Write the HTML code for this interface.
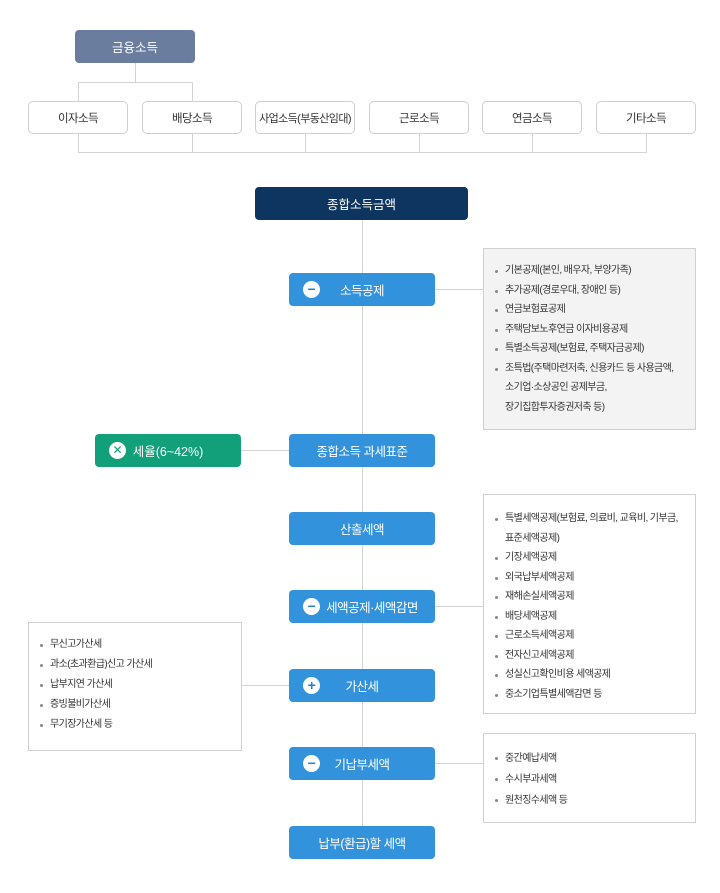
<!DOCTYPE html>
<html><head><meta charset="utf-8"><style>
body{margin:0;width:720px;height:893px;background:#fff;position:relative;font-family:"Liberation Sans","Noto Sans CJK KR",sans-serif;overflow:hidden}
.a{position:absolute;box-sizing:border-box}
.l{position:absolute;background:#d4d4d4}
.inc{position:absolute;box-sizing:border-box;top:101px;width:100px;height:33px;border:1px solid #cfcfcf;border-radius:5px;background:#fff;font-size:11.5px;color:#333;display:flex;align-items:center;justify-content:center;letter-spacing:-0.6px;white-space:nowrap}
.bb{position:absolute;box-sizing:border-box;left:289px;width:146px;height:33px;background:#3392dc;border-radius:4px;color:#fff;font-size:12.5px;display:flex;align-items:center;justify-content:center;letter-spacing:-0.5px}
.ic{position:absolute;left:14px;top:8px;width:17px;height:17px;border-radius:50%;background:#fff;color:#2a80c8;font-size:14px;font-weight:bold;line-height:17px;text-align:center}
.bx{position:absolute;box-sizing:border-box;border:1px solid #d0d0d0;font-size:10px;color:#333;letter-spacing:-0.6px;white-space:nowrap}
.bx ul{margin:0;padding:0;list-style:none}
.bx li{position:relative;padding-left:13px;line-height:19.5px}
.bx li:before{content:"";position:absolute;left:3px;top:9px;width:3px;height:3px;border-radius:50%;background:#888}
.bx li.n:before{display:none}
</style></head><body>
<div class="a" style="left:75px;top:30px;width:120px;height:33px;background:#6a7d9e;border-radius:4px;color:#fff;font-size:12.5px;display:flex;align-items:center;justify-content:center">금융소득</div>
<div class="l" style="left:135px;top:63px;width:1px;height:19px"></div>
<div class="l" style="left:78px;top:82px;width:115px;height:1px"></div>
<div class="l" style="left:78px;top:82px;width:1px;height:19px"></div>
<div class="l" style="left:192px;top:82px;width:1px;height:19px"></div>
<div class="inc" style="left:28px">이자소득</div>
<div class="inc" style="left:142px">배당소득</div>
<div class="inc" style="left:255px;font-size:11px">사업소득(부동산임대)</div>
<div class="inc" style="left:369px">근로소득</div>
<div class="inc" style="left:482px">연금소득</div>
<div class="inc" style="left:596px">기타소득</div>
<div class="l" style="left:78px;top:134px;width:1px;height:18px"></div>
<div class="l" style="left:192px;top:134px;width:1px;height:18px"></div>
<div class="l" style="left:305px;top:134px;width:1px;height:18px"></div>
<div class="l" style="left:419px;top:134px;width:1px;height:18px"></div>
<div class="l" style="left:532px;top:134px;width:1px;height:18px"></div>
<div class="l" style="left:646px;top:134px;width:1px;height:18px"></div>
<div class="l" style="left:78px;top:152px;width:569px;height:1px"></div>
<div class="a" style="left:255px;top:187px;width:213px;height:33px;background:#0d3560;border-radius:4px;color:#fff;font-size:12.5px;display:flex;align-items:center;justify-content:center">종합소득금액</div>
<div class="l" style="left:362px;top:220px;width:1px;height:608px"></div>
<div class="l" style="left:435px;top:289px;width:48px;height:1px"></div>
<div class="l" style="left:241px;top:450px;width:48px;height:1px"></div>
<div class="l" style="left:435px;top:606px;width:48px;height:1px"></div>
<div class="l" style="left:241px;top:685px;width:48px;height:1px"></div>
<div class="l" style="left:435px;top:763px;width:48px;height:1px"></div>
<div class="bb" style="top:273px"><span class="ic">−</span>소득공제</div>
<div class="a" style="left:95px;top:434px;width:146px;height:33px;background:#12a07b;border-radius:4px;color:#fff;font-size:12.5px;display:flex;align-items:center;justify-content:center"><span class="ic" style="color:#12a07b;font-size:12px;font-weight:normal">✕</span>세율(6~42%)</div>
<div class="bb" style="top:434px">종합소득 과세표준</div>
<div class="bb" style="top:512px">산출세액</div>
<div class="bb" style="top:590px;padding-left:20px"><span class="ic">−</span>세액공제·세액감면</div>
<div class="bb" style="top:669px"><span class="ic">+</span>가산세</div>
<div class="bb" style="top:747px"><span class="ic">−</span>기납부세액</div>
<div class="bb" style="top:826px">납부(환급)할 세액</div>
<div class="bx" style="left:483px;top:248px;width:213px;height:182px;background:#f3f3f3;padding:12px 0 0 8px"><ul>
<li>기본공제(본인, 배우자, 부양가족)</li><li>추가공제(경로우대, 장애인 등)</li><li>연금보험료공제</li><li>주택담보노후연금 이자비용공제</li><li>특별소득공제(보험료, 주택자금공제)</li><li>조특법(주택마련저축, 신용카드 등 사용금액,</li><li class="n">소기업·소상공인 공제부금,</li><li class="n">장기집합투자증권저축 등)</li></ul></div>
<div class="bx" style="left:483px;top:494px;width:213px;height:220px;background:#fff;padding:14px 0 0 8px"><ul>
<li>특별세액공제(보험료, 의료비, 교육비, 기부금,</li><li class="n">표준세액공제)</li><li>기장세액공제</li><li>외국납부세액공제</li><li>재해손실세액공제</li><li>배당세액공제</li><li>근로소득세액공제</li><li>전자신고세액공제</li><li>성실신고확인비용 세액공제</li><li>중소기업특별세액감면 등</li></ul></div>
<div class="bx" style="left:483px;top:733px;width:213px;height:90px;background:#fff;padding:14px 0 0 8px"><ul>
<li style="line-height:21px">중간예납세액</li><li style="line-height:21px">수시부과세액</li><li style="line-height:21px">원천징수세액 등</li></ul></div>
<div class="bx" style="left:28px;top:622px;width:214px;height:129px;background:#fff;padding:12px 0 0 8px"><ul>
<li style="line-height:20px">무신고가산세</li><li style="line-height:20px">과소(초과환급)신고 가산세</li><li style="line-height:20px">납부지연 가산세</li><li style="line-height:20px">증빙불비가산세</li><li style="line-height:20px">무기장가산세 등</li></ul></div>
</body></html>
